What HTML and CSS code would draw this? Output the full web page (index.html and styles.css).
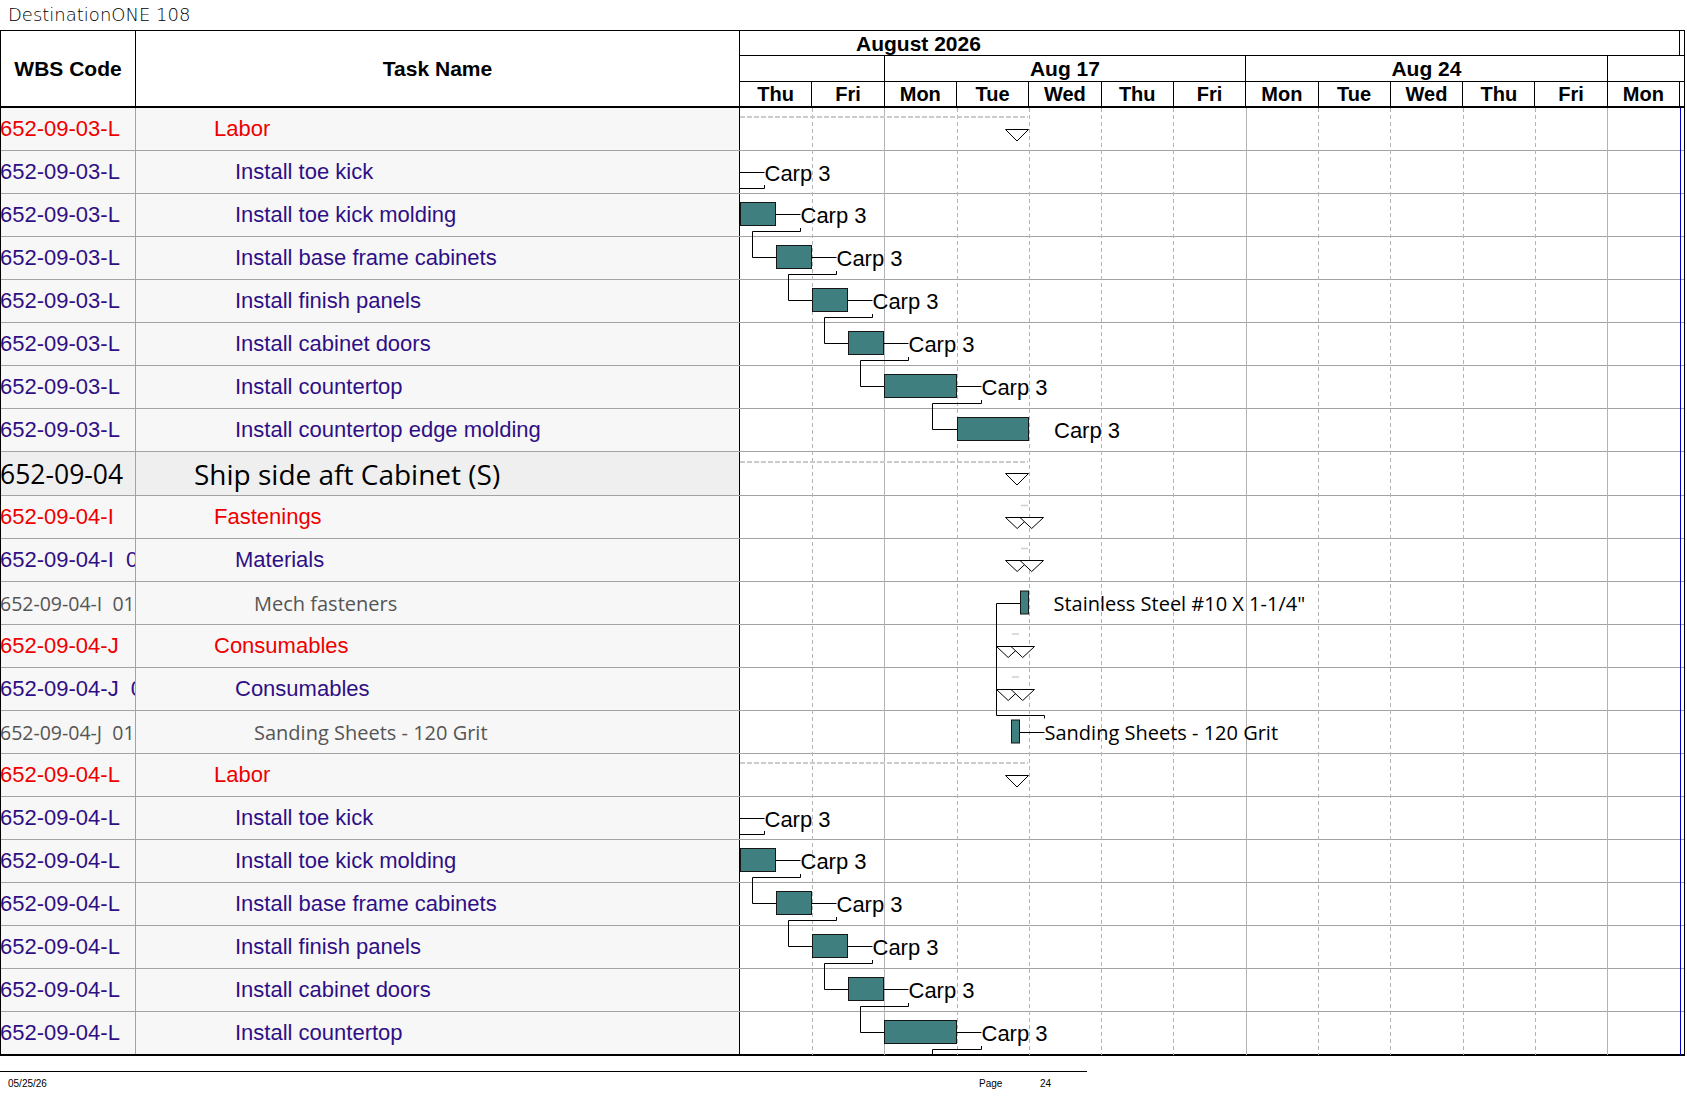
FILE: index.html
```html
<!DOCTYPE html>
<html>
<head>
<meta charset="utf-8">
<title>DestinationONE 108</title>
<link rel="stylesheet" href="styles.css">
</head>
<body>
<div class="title">DestinationONE 108</div>
<div class="sheet">
  <div class="head">
    <div class="hcell h-wbs">WBS Code</div>
    <div class="hcell h-task">Task Name</div>
    <div class="h-chart">
      <div class="month-row"><div class="month">August 2026</div><div></div></div>
      <div class="week-row">
        <div class="wk wk2"></div>
        <div class="wk wk5">Aug 17</div>
        <div class="wk wk5">Aug 24</div>
        <div class="wk wklast"></div>
      </div>
      <div class="day-row">
        <div class="day">Thu</div><div class="day">Fri</div><div class="day">Mon</div><div class="day">Tue</div><div class="day">Wed</div><div class="day">Thu</div><div class="day">Fri</div><div class="day">Mon</div><div class="day">Tue</div><div class="day">Wed</div><div class="day">Thu</div><div class="day">Fri</div><div class="day">Mon</div><div></div>
      </div>
    </div>
  </div>
  <div class="body">
    <div class="row red l1"><div class="wbs"><span>652-09-03-L</span></div><div class="task">Labor</div><div class="chart"></div></div>
    <div class="row blue l2"><div class="wbs"><span>652-09-03-L</span></div><div class="task">Install toe kick</div><div class="chart"></div></div>
    <div class="row blue l2"><div class="wbs"><span>652-09-03-L</span></div><div class="task">Install toe kick molding</div><div class="chart"></div></div>
    <div class="row blue l2"><div class="wbs"><span>652-09-03-L</span></div><div class="task">Install base frame cabinets</div><div class="chart"></div></div>
    <div class="row blue l2"><div class="wbs"><span>652-09-03-L</span></div><div class="task">Install finish panels</div><div class="chart"></div></div>
    <div class="row blue l2"><div class="wbs"><span>652-09-03-L</span></div><div class="task">Install cabinet doors</div><div class="chart"></div></div>
    <div class="row blue l2"><div class="wbs"><span>652-09-03-L</span></div><div class="task">Install countertop</div><div class="chart"></div></div>
    <div class="row blue l2"><div class="wbs"><span>652-09-03-L</span></div><div class="task">Install countertop edge molding</div><div class="chart"></div></div>
    <div class="row big l0"><div class="wbs"><span>652-09-04</span></div><div class="task">Ship side aft Cabinet (S)</div><div class="chart"></div></div>
    <div class="row red l1"><div class="wbs"><span>652-09-04-I</span></div><div class="task">Fastenings</div><div class="chart"></div></div>
    <div class="row blue l2"><div class="wbs"><span>652-09-04-I  0</span></div><div class="task">Materials</div><div class="chart"></div></div>
    <div class="row gray l3"><div class="wbs"><span>652-09-04-I  01</span></div><div class="task">Mech fasteners</div><div class="chart"></div></div>
    <div class="row red l1"><div class="wbs"><span>652-09-04-J</span></div><div class="task">Consumables</div><div class="chart"></div></div>
    <div class="row blue l2"><div class="wbs"><span>652-09-04-J  0</span></div><div class="task">Consumables</div><div class="chart"></div></div>
    <div class="row gray l3"><div class="wbs"><span>652-09-04-J  01</span></div><div class="task">Sanding Sheets - 120 Grit</div><div class="chart"></div></div>
    <div class="row red l1"><div class="wbs"><span>652-09-04-L</span></div><div class="task">Labor</div><div class="chart"></div></div>
    <div class="row blue l2"><div class="wbs"><span>652-09-04-L</span></div><div class="task">Install toe kick</div><div class="chart"></div></div>
    <div class="row blue l2"><div class="wbs"><span>652-09-04-L</span></div><div class="task">Install toe kick molding</div><div class="chart"></div></div>
    <div class="row blue l2"><div class="wbs"><span>652-09-04-L</span></div><div class="task">Install base frame cabinets</div><div class="chart"></div></div>
    <div class="row blue l2"><div class="wbs"><span>652-09-04-L</span></div><div class="task">Install finish panels</div><div class="chart"></div></div>
    <div class="row blue l2"><div class="wbs"><span>652-09-04-L</span></div><div class="task">Install cabinet doors</div><div class="chart"></div></div>
    <div class="row blue l2 last"><div class="wbs"><span>652-09-04-L</span></div><div class="task">Install countertop</div><div class="chart"></div></div>

    <svg class="gantt" width="944" height="947" viewBox="0 0 944 947" xmlns="http://www.w3.org/2000/svg">
      <g class="grid-dash">
        <line x1="72.5" y1="0" x2="72.5" y2="947"/>
        <line x1="217.5" y1="0" x2="217.5" y2="947"/>
        <line x1="289.5" y1="0" x2="289.5" y2="947"/>
        <line x1="361.5" y1="0" x2="361.5" y2="947"/>
        <line x1="433.5" y1="0" x2="433.5" y2="947"/>
        <line x1="578.5" y1="0" x2="578.5" y2="947"/>
        <line x1="650.5" y1="0" x2="650.5" y2="947"/>
        <line x1="723.5" y1="0" x2="723.5" y2="947"/>
        <line x1="795.5" y1="0" x2="795.5" y2="947"/>
      </g>
      <g class="grid-solid">
        <line x1="144.5" y1="0" x2="144.5" y2="947"/>
        <line x1="506.5" y1="0" x2="506.5" y2="947"/>
        <line x1="867.5" y1="0" x2="867.5" y2="947"/>
      </g>
      <line class="today" x1="940.5" y1="0" x2="940.5" y2="947"/>

      <g id="labor">
        <line class="sum" x1="0" y1="9" x2="288" y2="9"/>
        <polygon class="tri" points="265.5,21.5 288.5,21.5 277,33"/>
        <path class="ln" d="M0,64.5 H24.5"/>
        <text class="lbl" x="24.5" y="72.5">Carp 3</text>
        <path class="ln" d="M24.5,77 V80.5 H-24 V106.5 H0"/>

        <rect class="bar" x="0.5" y="94.5" width="35" height="23"/>
        <path class="ln" d="M36,106.5 H60.5"/>
        <text class="lbl" x="60.5" y="114.5">Carp 3</text>
        <path class="ln" d="M60.5,120 V123.5 H12.5 V149.5 H36"/>

        <rect class="bar" x="36.5" y="137.5" width="35" height="23"/>
        <path class="ln" d="M72,149.5 H96.5"/>
        <text class="lbl" x="96.5" y="157.5">Carp 3</text>
        <path class="ln" d="M96.5,163 V166.5 H48.5 V192.5 H72"/>

        <rect class="bar" x="72.5" y="180.5" width="35" height="23"/>
        <path class="ln" d="M108,192.5 H132.5"/>
        <text class="lbl" x="132.5" y="200.5">Carp 3</text>
        <path class="ln" d="M132.5,206 V209.5 H84.5 V235.5 H108"/>

        <rect class="bar" x="108.5" y="223.5" width="35" height="23"/>
        <path class="ln" d="M144,235.5 H168.5"/>
        <text class="lbl" x="168.5" y="243.5">Carp 3</text>
        <path class="ln" d="M168.5,249 V252.5 H120.5 V278.5 H144"/>

        <rect class="bar" x="144.5" y="266.5" width="72" height="23"/>
        <path class="ln" d="M217,278.5 H241.5"/>
        <text class="lbl" x="241.5" y="286.5">Carp 3</text>
        <path class="ln" d="M241.5,292 V295.5 H192.5 V321.5 H217"/>
      </g>

      <rect class="bar" x="217.5" y="309.5" width="71" height="23"/>
      <text class="lbl" x="314" y="329.5">Carp 3</text>

      <line class="sum" x1="0" y1="354" x2="288" y2="354"/>
      <polygon class="tri" points="265.5,365.5 288.5,365.5 277,377"/>

      <line class="sum-s" x1="281" y1="397.5" x2="288" y2="397.5"/>
      <polygon class="tri" points="265.5,409.5 289,409.5 277.2,420.5"/>
      <polygon class="tri" points="280,409.5 303.5,409.5 291.7,420.5"/>

      <line class="sum-s" x1="281" y1="440.5" x2="288" y2="440.5"/>
      <polygon class="tri" points="265.5,452.5 289,452.5 277.2,463.5"/>
      <polygon class="tri" points="280,452.5 303.5,452.5 291.7,463.5"/>

      <rect class="bar" x="280.5" y="483" width="8" height="23"/>
      <path class="ln" d="M280,495.5 H256.5 V607.5 H304.5 V610.5"/>
      <text class="lbl2" x="313.5" y="503">Stainless Steel #10 X 1-1/4"</text>

      <line class="sum-s" x1="272" y1="526" x2="279" y2="526"/>
      <polygon class="tri" points="256.5,538.5 280,538.5 268.2,549.5"/>
      <polygon class="tri" points="271,538.5 294.5,538.5 282.7,549.5"/>

      <line class="sum-s" x1="272" y1="569" x2="279" y2="569"/>
      <polygon class="tri" points="256.5,581.5 280,581.5 268.2,592.5"/>
      <polygon class="tri" points="271,581.5 294.5,581.5 282.7,592.5"/>

      <rect class="bar" x="271.5" y="612" width="8" height="23"/>
      <path class="ln" d="M280,624.5 H304.5"/>
      <text class="lbl2" x="304.5" y="632">Sanding Sheets - 120 Grit</text>

      <use href="#labor" x="0" y="646"/>
    </svg>
  </div>
</div>
<div class="footer">
  <span>05/25/26</span>
  <span>Page</span>
  <span>24</span>
</div>
</body>
</html>
```

FILE: styles.css
```css
body {
  margin: 0;
  background: #fff;
  color: #000;
  font-family: "Liberation Sans", Arial, sans-serif;
}

.title {
  height: 30px;
  line-height: 30px;
  padding-left: 8px;
  font-family: "DejaVu Sans", sans-serif;
  font-weight: 200;
  font-size: 18px;
  white-space: nowrap;
}

.sheet {
  width: 1683px;
  border: 1px solid #000;
}

.head {
  display: grid;
  grid-template-columns: 135px 604px 944px;
  height: 75px;
  border-bottom: 2px solid #000;
}

.hcell {
  display: flex;
  align-items: center;
  justify-content: center;
  font-weight: bold;
  font-size: 21px;
  box-sizing: border-box;
  border-right: 1px solid #000;
}

.h-chart {
  display: flex;
  flex-direction: column;
}

.month-row {
  height: 25px;
  box-sizing: border-box;
  border-bottom: 1px solid #000;
  display: grid;
  grid-template-columns: 940px 1fr;
}

.month {
  border-right: 1px solid #000;
  padding-left: 116px;
  font-weight: bold;
  font-size: 21px;
  line-height: 25px;
}

.week-row {
  height: 26px;
  box-sizing: border-box;
  border-bottom: 1px solid #000;
  display: grid;
  grid-template-columns: repeat(13, 72.32px) 1fr;
}

.wk {
  box-sizing: border-box;
  text-align: center;
  font-weight: bold;
  font-size: 21px;
  line-height: 26px;
}

.wk2 { grid-column: span 2; border-right: 1px solid #000; }
.wk5 { grid-column: span 5; border-right: 1px solid #000; }
.wklast { grid-column: span 2; }

.day-row {
  height: 24px;
  display: grid;
  grid-template-columns: repeat(13, 72.32px) 1fr;
}

.day {
  box-sizing: border-box;
  border-right: 1px solid #000;
  text-align: center;
  font-weight: bold;
  font-size: 20px;
  line-height: 25px;
}

.body {
  position: relative;
}

.row {
  display: grid;
  grid-template-columns: 135px 604px 944px;
  height: 43px;
  box-sizing: border-box;
  border-bottom: 1px solid #a3a3a3;
  font-size: 22px;
}

.row.big { height: 44px; }
.row.last { border-bottom-color: #000; }

.wbs, .task {
  background: #f7f7f7;
  box-sizing: border-box;
  display: flex;
  align-items: center;
  overflow: hidden;
  white-space: pre;
}

.wbs { border-right: 1px solid #a3a3a3; }
.wbs span { margin-left: -1px; }
.task { border-right: 1px solid #000; }

.chart { background: #fff; }

.l0 .task { padding-left: 58px; }
.l1 .task { padding-left: 78px; }
.l2 .task { padding-left: 99px; }
.l3 .task { padding-left: 118px; }

.red { color: #ee0000; }
.blue { color: #2f0f85; }

.big .wbs, .big .task {
  background: #efefef;
  font-family: "Open Sans", "Liberation Sans", sans-serif;
  font-size: 26.5px;
  color: #000;
}

.big .task { font-size: 28px; }

.gray .wbs, .gray .task {
  font-family: "Open Sans", "Liberation Sans", sans-serif;
  font-size: 19.5px;
  color: #555;
}

.gray .task { font-size: 20px; }

.gantt {
  position: absolute;
  left: 739px;
  top: 0;
  overflow: hidden;
}

.grid-dash line {
  stroke: #b4b4b4;
  stroke-width: 1;
  stroke-dasharray: 4 3;
}

.grid-solid line {
  stroke: #b4b4b4;
  stroke-width: 1;
}

.today {
  stroke: #0000c8;
  stroke-width: 1;
}

.sum {
  stroke: #cbcbcb;
  stroke-width: 2;
  stroke-dasharray: 5 2;
}

.sum-s {
  stroke: #cfcfcf;
  stroke-width: 1.5;
}

.tri {
  fill: #fff;
  stroke: #000;
  stroke-width: 1;
}

.bar {
  fill: #3f7f7f;
  stroke: #161616;
  stroke-width: 1;
}

.ln {
  fill: none;
  stroke: #000;
  stroke-width: 1;
}

.lbl {
  font-family: "Liberation Sans", Arial, sans-serif;
  font-size: 22px;
  fill: #000;
}

.lbl2 {
  font-family: "Open Sans", "Liberation Sans", sans-serif;
  font-size: 20px;
  fill: #000;
}

.footer {
  width: 1079px;
  margin-top: 15px;
  padding-left: 8px;
  padding-top: 6px;
  border-top: 1px solid #000;
  display: grid;
  grid-template-columns: 971px 61px auto;
  font-size: 10px;
}
```
